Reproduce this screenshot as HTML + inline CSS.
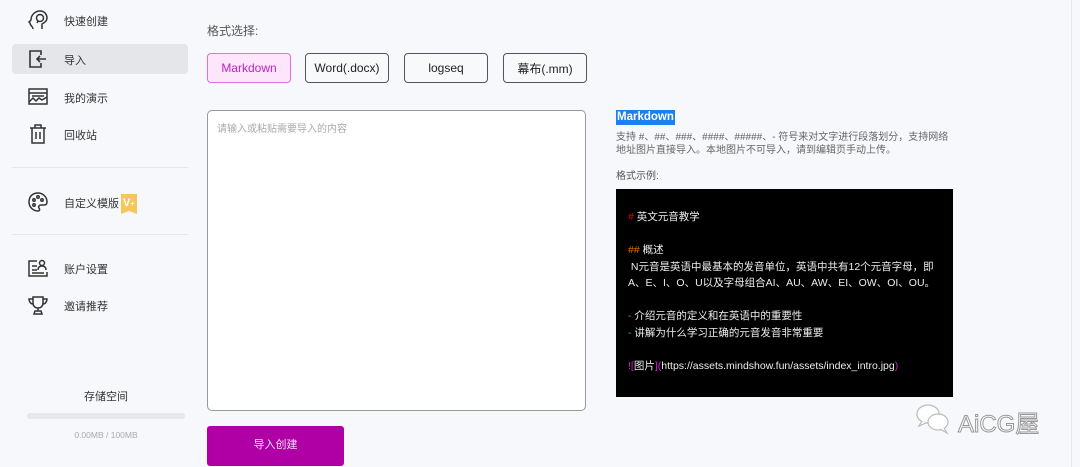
<!DOCTYPE html>
<html><head><meta charset="utf-8"><style>
*{margin:0;padding:0;box-sizing:border-box}
body{width:1080px;height:467px;background:#f7f8fb;font-family:"Liberation Sans","Noto Sans CJK SC",sans-serif;position:relative;overflow:hidden;color:#333}
.a{position:absolute}
.nav{left:12px;width:176px;height:30px;font-size:11px;color:#333}
.nav span{position:absolute;left:52px;top:8px}
.nav svg{position:absolute;left:15px;top:4px}
.hr{left:12px;width:176px;height:1px;background:#e6e7ea}
.btn{top:53px;height:30px;border:1px solid #555;border-radius:4px;font-size:12px;display:flex;align-items:center;justify-content:center;color:#222;background:#f8f9fb}
pre{font-family:"Liberation Sans","Noto Sans CJK SC",sans-serif;font-size:10.5px;line-height:16.5px;color:#eee;white-space:pre}
</style></head><body>
<div class="a nav" style="top:5px"><svg width="22" height="22" viewBox="0 0 22 22" fill="none" stroke="#333" stroke-width="1.5"><path d="M6 20c0-3-3-3-3-6l-1-1 2-2c0-5 4-9 9-9s7 4 7 7-3 5-5 6v5"/><circle cx="13" cy="9" r="3.5"/><path d="M11 12l-1 2"/></svg><span>快速创建</span></div>
<div class="a nav" style="top:44px;background:#e4e6e9;border-radius:4px"><svg width="22" height="22" viewBox="0 0 22 22" fill="none" stroke="#333" stroke-width="1.6"><path d="M14 7V3H3v16h11v-4M19 11h-9M13 8l-3 3 3 3"/></svg><span>导入</span></div>
<div class="a nav" style="top:82px"><svg width="22" height="22" viewBox="0 0 22 22" fill="none" stroke="#333" stroke-width="1.5"><rect x="2" y="3" width="18" height="15"/><path d="M2 7h18M5 10h12M2 16l4-4 3 3 3-3 3 2 5-3"/></svg><span>我的演示</span></div>
<div class="a nav" style="top:119px"><svg width="22" height="22" viewBox="0 0 22 22" fill="none" stroke="#333" stroke-width="1.5"><path d="M3 5h16M8 5V2h6v3M5 5v15h12V5M9 9v7M13 9v7"/></svg><span>回收站</span></div>
<div class="a hr" style="top:167px"></div>
<div class="a nav" style="top:187px"><svg width="22" height="22" viewBox="0 0 22 22" fill="none" stroke="#333" stroke-width="1.5"><path d="M11 2C5 2 2 6 2 11s4 9 9 9c2 0 2-2 1-3s0-3 2-3h3c2 0 3-1 3-3 0-5-4-9-9-9z"/><circle cx="7" cy="9" r="1.2"/><circle cx="11" cy="6" r="1.2"/><circle cx="15" cy="9" r="1.2"/><circle cx="7" cy="14" r="1.2"/></svg><span>自定义模版</span></div>
<div class="a" style="left:121px;top:194px;width:16px;height:20px;background:#f6c65b;clip-path:polygon(0 0,100% 0,100% 100%,50% 85%,0 100%);color:#fff;font-weight:bold;font-size:11px;padding-left:2px;line-height:18px">V<span style="font-size:7px">+</span></div>
<div class="a hr" style="top:234px"></div>
<div class="a nav" style="top:253px"><svg width="22" height="22" viewBox="0 0 22 22" fill="none" stroke="#333" stroke-width="1.5"><path d="M10 4H2v15h18v-4M5 9h5M5 13h5M5 16h12"/><circle cx="15" cy="6" r="2.5"/><path d="M11 13c0-3 2-4 4-4s4 1 4 4"/></svg><span>账户设置</span></div>
<div class="a nav" style="top:290px"><svg width="22" height="22" viewBox="0 0 22 22" fill="none" stroke="#333" stroke-width="1.5"><path d="M6 3h10v6c0 3-2 5-5 5S6 12 6 9zM6 5H2c0 3 2 5 4 5M16 5h4c0 3-2 5-4 5M11 14v3M7 20l1-3h6l1 3z"/></svg><span>邀请推荐</span></div>
<div class="a" style="left:6px;width:200px;top:388px;text-align:center;font-size:11px;color:#333">存储空间</div>
<div class="a" style="left:27px;top:413px;width:158px;height:6px;border-radius:3px;background:#e6e7ea"></div>
<div class="a" style="left:0;width:212px;top:430px;text-align:center;font-size:8.5px;color:#aaa">0.00MB / 100MB</div>

<div class="a" style="left:207px;top:22px;font-size:12px;color:#555">格式选择:</div>
<div class="a btn" style="left:207px;width:84px;border-color:#e070e0;background:#fde6fc;color:#c020c0">Markdown</div>
<div class="a btn" style="left:305px;width:84px">Word(.docx)</div>
<div class="a btn" style="left:404px;width:84px">logseq</div>
<div class="a btn" style="left:503px;width:84px">幕布(.mm)</div>
<div class="a" style="left:207px;top:110px;width:379px;height:301px;border:1px solid #999;border-radius:5px;background:#fff;font-size:10px;color:#aaa;padding:9px 9px">请输入或粘贴需要导入的内容</div>
<div class="a" style="left:207px;top:426px;width:137px;height:40px;background:#b000a5;border-radius:3px;color:#f5d7f3;font-size:11px;text-align:center;line-height:38px">导入创建</div>

<div class="a" style="left:616px;top:110px;font-size:11.5px;font-weight:bold;background:#1a7ff0;color:#fff;padding:0 1px;line-height:15px">Markdown</div>
<div class="a" style="left:616px;top:131px;font-size:10px;color:#666;line-height:13px;width:336px">支持 #、##、###、####、#####、- 符号来对文字进行段落划分，支持网络地址图片直接导入。本地图片不可导入，请到编辑页手动上传。</div>
<div class="a" style="left:616px;top:167px;font-size:10px;color:#555">格式示例:</div>
<div class="a" style="left:616px;top:189px;width:337px;height:208px;background:#000;padding:20px 12px">
<pre><span style="color:#d00">#</span> 英文元音教学

<span style="color:#d70">##</span> 概述
 N元音是英语中最基本的发音单位，英语中共有12个元音字母，即
A、E、I、O、U以及字母组合AI、AU、AW、EI、OW、OI、OU。

<span style="color:#2c2">-</span> 介绍元音的定义和在英语中的重要性
<span style="color:#2c2">-</span> 讲解为什么学习正确的元音发音非常重要

<span style="color:#c2c">![</span>图片<span style="color:#c2c">](</span>https://assets.mindshow.fun/assets/index_intro.jpg<span style="color:#c2c">)</span></pre></div>
<div class="a" style="left:914px;top:402px;width:40px;height:34px"><svg width="40" height="34" viewBox="0 0 40 34" fill="#fff" stroke="#bbb" stroke-width="1.2"><ellipse cx="14" cy="12" rx="11" ry="9"/><path d="M8 19l-3 5 7-3"/><ellipse cx="24" cy="20" rx="10" ry="8"/><path d="M30 26l3 5-7-4"/></svg></div>
<div class="a" style="left:958px;top:404px;font-size:24px;color:#fff;-webkit-text-stroke:1px #999;font-family:'Liberation Sans','Noto Sans CJK SC',sans-serif">AiCG屋</div>
<div class="a" style="left:1071px;top:0;width:1px;height:467px;background:#e8e9ec"></div>
</body></html>
